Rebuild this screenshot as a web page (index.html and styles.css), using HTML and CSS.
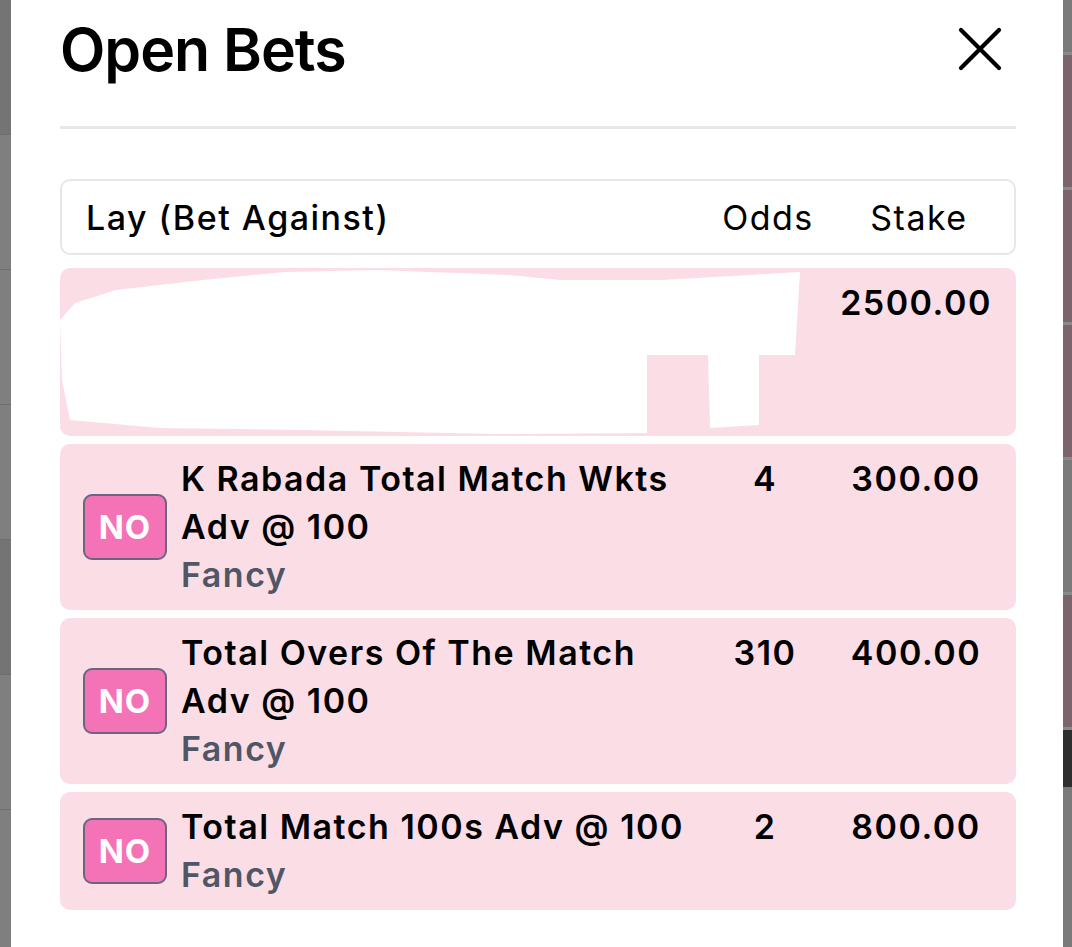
FILE: index.html
```html
<!DOCTYPE html>
<html lang="en">
<head>
<meta charset="utf-8">
<title>Open Bets</title>
<link rel="stylesheet" href="styles.css">
</head>
<body>
<div class="backdrop">
  <div class="side side-left">
    <div class="seg seg-a"></div><div class="seg"></div><div class="seg"></div><div class="seg"></div><div class="seg seg-a"></div><div class="seg"></div>
  </div>
  <div class="modal">
    <div class="modal-head">
      <h1 class="title">Open Bets</h1>
      <button class="close" aria-label="Close">
        <svg width="44" height="44" viewBox="0 0 44 44"><path d="M3 3 L41 41 M41 3 L3 41" stroke="#000" stroke-width="4.2" stroke-linecap="round" fill="none"/></svg>
      </button>
    </div>
    <div class="divider"></div>
    <div class="table-head">
      <span class="th-name">Lay (Bet Against)</span>
      <span class="th-odds">Odds</span>
      <span class="th-stake">Stake</span>
    </div>
    <div class="bets">
      <div class="bet bet-redacted">
        <svg class="scribble" viewBox="0 0 745 170">
          <path d="M0 52 L15 35 L56 22 L143 12 L225 4 L317 2 L449 7 L500 12 L602 12 L689 7 L740 4 L735 87 L699 87 L699 157 L650 160 L648 87 L587 87 L587 165 L440 166 L240 162 L100 160 L10 152 L2 112 Z" fill="#fff"/>
        </svg>
        <div class="name-col"></div>
        <div class="odds"></div>
        <div class="stake">2500.00</div>
      </div>
      <div class="bet">
        <div class="name-col">
          <span class="badge">NO</span>
          <div class="info">
            <div class="market">K Rabada Total Match Wkts Adv @ 100</div>
            <div class="type">Fancy</div>
          </div>
        </div>
        <div class="odds">4</div>
        <div class="stake">300.00</div>
      </div>
      <div class="bet">
        <div class="name-col">
          <span class="badge">NO</span>
          <div class="info">
            <div class="market">Total Overs Of The Match Adv @ 100</div>
            <div class="type">Fancy</div>
          </div>
        </div>
        <div class="odds">310</div>
        <div class="stake">400.00</div>
      </div>
      <div class="bet">
        <div class="name-col">
          <span class="badge">NO</span>
          <div class="info">
            <div class="market">Total Match 100s Adv @ 100</div>
            <div class="type">Fancy</div>
          </div>
        </div>
        <div class="odds">2</div>
        <div class="stake">800.00</div>
      </div>
    </div>
  </div>
  <div class="side side-right">
    <div class="rseg"></div><div class="rseg mauve"></div><div class="rseg mauve"></div><div class="rseg mauve"></div><div class="rseg"></div><div class="rseg mauve"></div><div class="rseg dark"></div>
  </div>
</div>
</body>
</html>
```
FILE: styles.css
```css
* { box-sizing: border-box; }
html, body { margin: 0; padding: 0; }
body {
  width: 1072px;
  height: 947px;
  overflow: hidden;
  background: #7d7d7d;
  font-family: Inter, "Noto Sans", "Liberation Sans", sans-serif;
  color: #000;
}
.backdrop {
  display: flex;
  height: 947px;
}
.side { flex: none; display: flex; flex-direction: column; }
.side-left { width: 11px; background: #7f7f7f; }
.side-left .seg { height: 135px; border-bottom: 1px solid #6e6e6e; }
.side-left .seg-a { background: #747474; }
.side-right { width: 9px; background: #7a7a7a; }
.rseg { height: 135px; border-top: 3px solid #8a8a8a; }
.rseg:first-child { height: 52px; border-top: none; }
.rseg.mauve { background: #7b646c; }
.rseg.dark { background: #2e2e2e; height: 60px; }
.modal {
  flex: 1;
  background: #fff;
  padding: 14px 47px 0 49px;
}
.modal-head {
  display: flex;
  justify-content: space-between;
  align-items: center;
  height: 72px;
}
.title {
  margin: 0;
  font-size: 59px;
  font-weight: 600;
  letter-spacing: -1px;
  line-height: 72px;
}
.close {
  border: none;
  background: none;
  padding: 0;
  margin-right: 14px;
  margin-top: -2px;
  display: flex;
}
.divider {
  height: 3px;
  background: #e6e7eb;
  margin-top: 40px;
}
.table-head {
  margin-top: 50px;
  height: 76px;
  border: 2.5px solid #e5e7eb;
  border-radius: 10px;
  display: grid;
  grid-template-columns: 1fr 110px 160px;
  column-gap: 16px;
  align-items: center;
  padding: 0 15px 0 24px;
  font-size: 34px;
  letter-spacing: 1.5px;
}
.th-name { font-weight: 500; }
.th-odds, .th-stake { text-align: center; font-weight: 400; }
.bets {
  margin-top: 13px;
  display: flex;
  flex-direction: column;
  gap: 8px;
}
.bet {
  position: relative;
  background: #fadde5;
  border-radius: 10px;
  display: grid;
  grid-template-columns: 1fr 110px 160px;
  column-gap: 16px;
  padding: 11px 20px 11px 23px;
  font-size: 34px;
  letter-spacing: 1.5px;
  font-weight: 600;
  line-height: 48px;
}
.bet-redacted { height: 168px; }
.scribble {
  position: absolute;
  left: 0;
  top: 0;
  width: 745px;
  height: 170px;
}
.name-col {
  display: flex;
  align-items: center;
  gap: 14px;
}
.badge {
  flex: none;
  width: 84px;
  height: 66px;
  background: #f472b6;
  border: 2.5px solid #6d6580;
  border-radius: 9px;
  color: #fff;
  font-weight: 700;
  font-size: 33px;
  letter-spacing: 1px;
  display: flex;
  align-items: center;
  justify-content: center;
}
.info { display: flex; flex-direction: column; }
.type { color: #4f5665; font-weight: 600; }
.odds, .stake { text-align: center; }
```
